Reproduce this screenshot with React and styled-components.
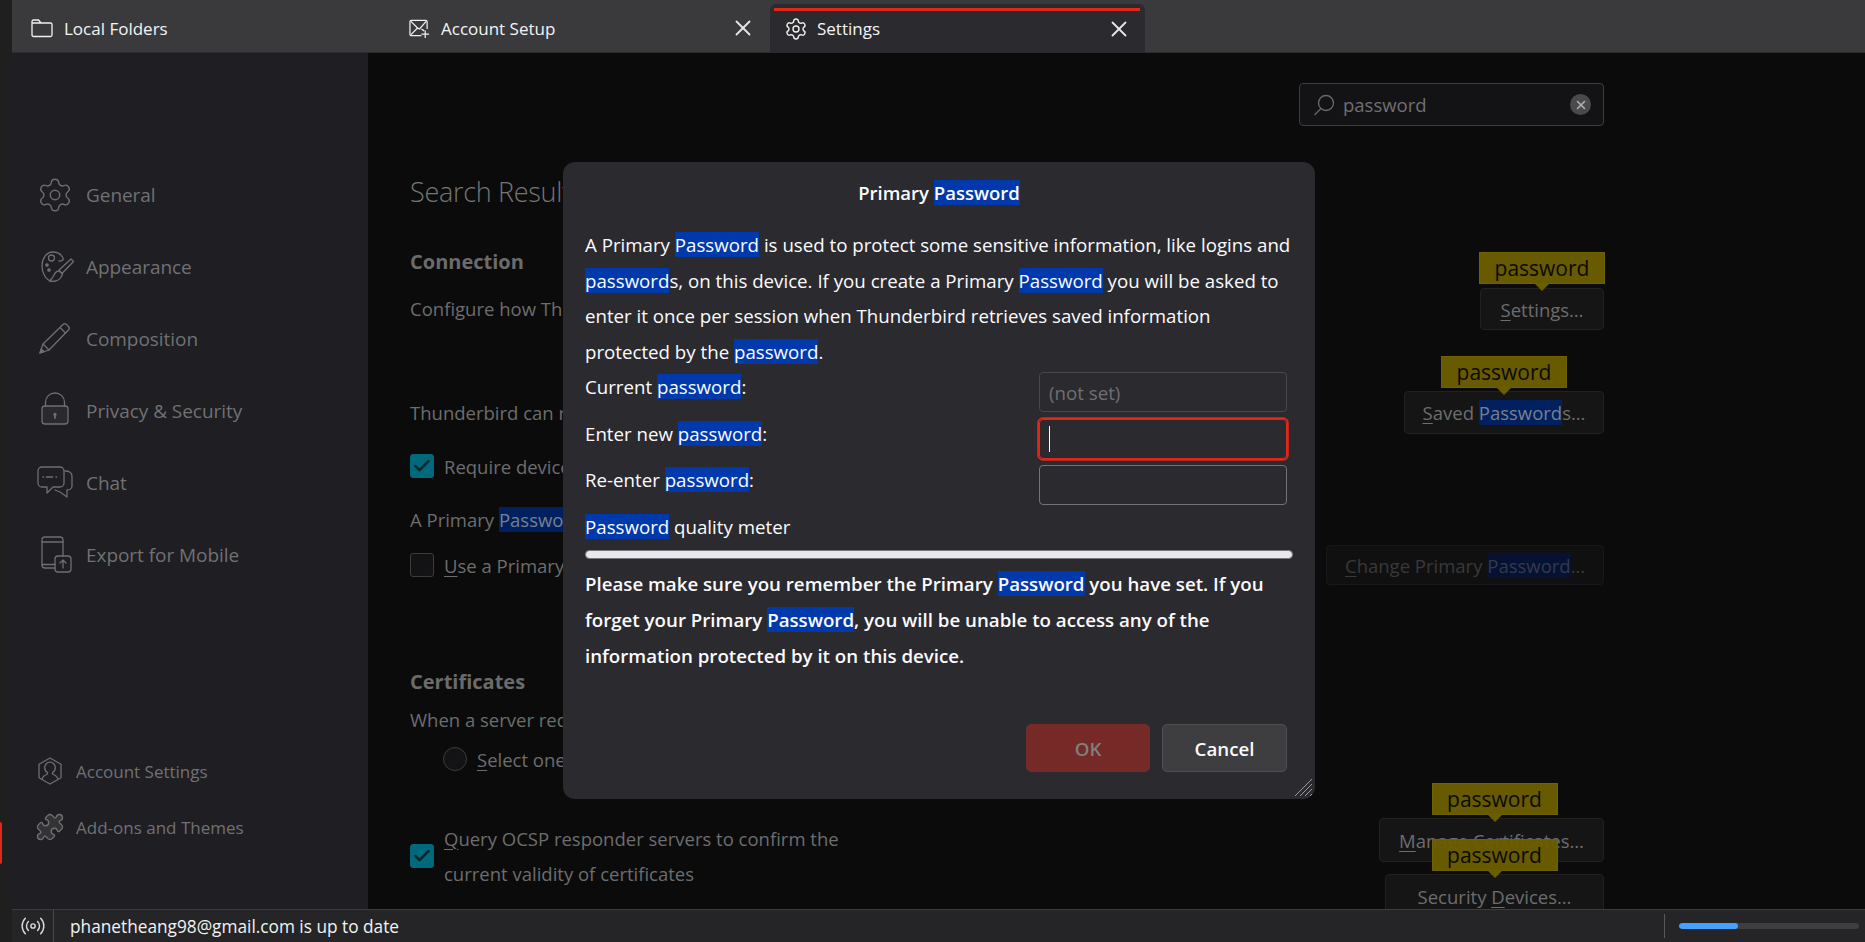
import React from 'react';
import styled, { createGlobalStyle } from 'styled-components';
import { Settings as GearIcon, X, Puzzle, Radio, Check } from 'lucide-react';

const GlobalStyle = createGlobalStyle`
	html, body {
		margin: 0;
		height: 100%;
		background: #0b0b0b;
		overflow: hidden;
	}
	* {
		box-sizing: border-box;
	}
	body {
		font-family: 'Open Sans', 'Noto Sans', sans-serif;
		font-size: 17px;
	}
`;

const Page = styled.div`
	position: relative;
	display: flex;
	width: 100vw;
	height: 100vh;
	overflow: hidden;
`;

const EdgeStrip = styled.div`
	width: 12px;
	flex: none;
	background: #1f1f1f;
	display: flex;
	flex-direction: column;
	justify-content: flex-end;
	padding-bottom: 78px;
`;

const EdgeMark = styled.div`
	width: 2px;
	height: 42px;
	background: #e22618;
	border-radius: 0 2px 2px 0;
`;

const Main = styled.div`
	flex: 1;
	min-width: 0;
	display: flex;
	flex-direction: column;
`;

const TabBar = styled.div`
	height: 53px;
	flex: none;
	display: flex;
	padding-left: 1px;
	background: #3a3a3c;
	border-bottom: 1px solid #2c2c2e;
`;

const Tab = styled.div`
	position: relative;
	width: ${(p) => p.$width}px;
	height: ${(p) => (p.$active ? '49px' : '52px')};
	margin-top: ${(p) => (p.$active ? '4px' : '0')};
	display: flex;
	align-items: center;
	gap: ${(p) => (p.$active ? '9px' : '11px')};
	padding: ${(p) => (p.$active ? '0 13px 0 14px' : '4px 14px 0 18px')};
	color: #f4f4f5;
	font-size: 17px;
	background: ${(p) => (p.$active ? '#2b2a2f' : 'transparent')};
	border-radius: ${(p) => (p.$active ? '6px 6px 0 0' : '0')};
	&::before {
		content: ${(p) => (p.$active ? "''" : 'none')};
		position: absolute;
		top: 4px;
		left: 4px;
		right: 5px;
		height: 3px;
		background: #e22618;
	}
`;

const TabLabel = styled.span`
	flex: 1;
`;

const TabClose = styled(X)`
	width: 26px;
	height: 26px;
	color: #e6e6e6;
	stroke-width: 1.7;
`;

const Body = styled.div`
	flex: 1;
	min-height: 0;
	display: flex;
`;

const Sidebar = styled.nav`
	width: 356px;
	flex: none;
	background: #1e1e23;
	display: flex;
	flex-direction: column;
	padding: 106px 0 54px;
`;

const NavItem = styled.div`
	height: 72px;
	display: flex;
	align-items: center;
	padding-left: 22px;
	gap: 10px;
	color: #717173;
	font-size: 19px;
	letter-spacing: -0.05px;
`;

const NavIcon = styled.svg`
	width: 42px;
	height: 42px;
	flex: none;
	fill: none;
	stroke: #6f6f71;
	stroke-width: 1.3;
	stroke-linecap: round;
	stroke-linejoin: round;
`;

const GeneralIcon = styled(GearIcon)`
	width: 38px;
	height: 38px;
	margin: 0 2px;
	flex: none;
	color: #6f6f71;
	stroke-width: 0.9;
`;

const NavFooter = styled.div`
	margin-top: auto;
`;

const SmallNavItem = styled.div`
	height: 56px;
	display: flex;
	align-items: center;
	padding-left: 23px;
	gap: 11px;
	color: #717173;
	font-size: 17px;
`;

const SmallIcon = styled.svg`
	width: 30px;
	height: 30px;
	flex: none;
	fill: none;
	stroke: #6f6f71;
	stroke-width: 1.3;
	stroke-linecap: round;
	stroke-linejoin: round;
`;

const PuzzleIcon = styled(Puzzle)`
	width: 30px;
	height: 30px;
	flex: none;
	color: #6f6f71;
	fill: #333336;
	stroke-width: 1.1;
`;

const Content = styled.main`
	position: relative;
	flex: 1;
	min-width: 0;
	overflow: hidden;
	background: #0b0b0b;
	padding: 30px 261px 0 42px;
	color: #6d6d6e;
	font-size: 18.5px;
`;

const SearchRow = styled.div`
	display: flex;
	justify-content: flex-end;
`;

const SearchBox = styled.div`
	width: 305px;
	height: 43px;
	display: flex;
	align-items: center;
	gap: 8px;
	padding: 0 12px 0 13px;
	background: #131316;
	border: 1px solid #3c3c3e;
	border-radius: 4px;
	color: #707072;
`;

const SearchIcon = styled.svg`
	width: 22px;
	height: 22px;
	fill: none;
	stroke: #6a6a6c;
	stroke-width: 1.3;
	flex: none;
`;

const SearchText = styled.span`
	flex: 1;
`;

const ClearButton = styled.div`
	width: 21px;
	height: 21px;
	border-radius: 50%;
	background: #4a4a4c;
	display: flex;
	align-items: center;
	justify-content: center;
	color: #b0b0b0;
`;

const PageTitle = styled.h1`
	margin: 46px 0 0;
	font-size: 27px;
	line-height: 40px;
	font-weight: 300;
	letter-spacing: -0.3px;
	color: #757576;
`;

const SectionTitle = styled.h2`
	margin: ${(p) => p.$top}px 0 0;
	font-size: 20px;
	line-height: 30px;
	font-weight: 700;
	color: #6b6b6c;
`;

const SpreadRow = styled.div`
	margin-top: ${(p) => p.$top}px;
	display: flex;
	justify-content: space-between;
	align-items: ${(p) => (p.$start ? 'flex-start' : 'center')};
`;

const RowText = styled.div`
	line-height: ${(p) => p.$line || 36}px;
	margin-top: ${(p) => p.$top || 0}px;
`;

const CheckRow = styled.div`
	display: flex;
	align-items: center;
	gap: 10px;
	margin-top: ${(p) => p.$top || 0}px;
	padding-left: ${(p) => p.$indent || 0}px;
	line-height: 35px;
`;

const CheckBox = styled.div`
	width: 24px;
	height: 24px;
	flex: none;
	display: flex;
	align-items: center;
	justify-content: center;
	border-radius: 3px;
	background: ${(p) => (p.$checked ? '#006a7c' : '#131316')};
	border: 1px solid ${(p) => (p.$checked ? '#006a7c' : '#3c3c3e')};
	color: #0b2730;
`;

const RadioDot = styled.div`
	width: 24px;
	height: 24px;
	flex: none;
	border-radius: 50%;
	background: #131316;
	border: 1px solid #3c3c3e;
`;

const ButtonColumn = styled.div`
	display: flex;
	flex-direction: column;
	align-items: flex-end;
	gap: 12px;
`;

const GhostButton = styled.div`
	position: relative;
	width: ${(p) => p.$width}px;
	height: ${(p) => p.$height || 43}px;
	display: flex;
	align-items: center;
	justify-content: center;
	background: ${(p) => (p.$faint ? '#101011' : '#151516')};
	border: 1px solid ${(p) => (p.$faint ? '#18181a' : '#212122')};
	border-radius: 4px;
	color: ${(p) => (p.$faint ? '#39393b' : '#6d6d6e')};
	white-space: nowrap;
`;

const Tooltip = styled.div`
	position: absolute;
	bottom: calc(100% + ${(p) => p.$lift || 4}px);
	left: 50%;
	transform: translateX(calc(-50% + ${(p) => p.$shift || 0}px));
	width: 126px;
	height: 32px;
	display: flex;
	align-items: center;
	justify-content: center;
	background: rgba(107, 94, 0, 0.96);
	border: 1px solid #6f6200;
	color: #0c0b00;
	font-size: 21px;
	z-index: 2;
	&::after {
		content: '';
		position: absolute;
		top: 100%;
		left: 50%;
		margin-left: -8px;
		border: 8px solid transparent;
		border-top-color: #6b5e00;
		border-bottom: 0;
	}
`;

const Hit = styled.span`
	background: ${(p) => (p.$faint ? '#061233' : '#00205f')};
	color: ${(p) => (p.$faint ? '#343a48' : '#77808f')};
`;

const Key = styled.span`
	text-decoration: underline;
	text-underline-offset: 3px;
	text-decoration-thickness: 1px;
`;

const StatusBar = styled.footer`
	height: 33px;
	flex: none;
	display: flex;
	align-items: center;
	background: #252527;
	border-top: 1px solid #3c3c3e;
	color: #f2f2f3;
	font-size: 17.25px;
	position: relative;
	z-index: 1;
`;

const StatusIcon = styled.div`
	width: 42px;
	height: 100%;
	flex: none;
	display: flex;
	align-items: center;
	justify-content: center;
	border-right: 1px solid #48484a;
	color: #dcdcdc;
`;

const StatusText = styled.span`
	flex: 1;
	padding-left: 16px;
`;

const StatusDivider = styled.div`
	width: 1px;
	height: 24px;
	background: #58585a;
`;

const Progress = styled.div`
	width: 180px;
	height: 6px;
	margin: 0 6px 0 14px;
	border-radius: 3px;
	background: #3e3e40;
	overflow: hidden;
`;

const ProgressFill = styled.div`
	height: 100%;
	width: 33%;
	border-radius: 3px;
	background: #45a1ff;
`;

const Dialog = styled.section`
	position: absolute;
	top: 162px;
	left: 563px;
	width: 752px;
	height: 637px;
	display: flex;
	flex-direction: column;
	padding: 13px 22px 27px;
	background: #2b2a2f;
	border-radius: 12px;
	color: #fbfbfe;
	font-size: 18.7px;
	z-index: 5;
`;

const DialogTitle = styled.div`
	text-align: center;
	font-weight: 600;
	font-size: 18.5px;
	line-height: 36px;
`;

const Mark = styled.span`
	background: #0039ab;
`;

const Paragraph = styled.p`
	margin: ${(p) => p.$top}px 0 0;
	line-height: 35.6px;
	white-space: nowrap;
	font-weight: ${(p) => (p.$bold ? 600 : 400)};
`;

const FormGrid = styled.div`
	margin-top: 3px;
	padding-right: 6px;
	display: grid;
	grid-template-columns: 1fr 248px;
	grid-auto-rows: 40px;
	row-gap: 6.5px;
`;

const FieldLabel = styled.label`
	line-height: 30px;
`;

const Field = styled.div`
	display: flex;
	align-items: center;
	padding: 0 9px;
	border-radius: 4px;
	color: #6f6f72;
	border: 1px solid ${(p) => (p.$focus ? '#e22618' : p.$disabled ? '#49494c' : '#737376')};
	box-shadow: ${(p) => (p.$focus ? '0 0 0 1.8px #e22618' : 'none')};
`;

const Caret = styled.div`
	width: 1px;
	height: 26px;
	background: #fbfbfe;
`;

const MeterLabel = styled.div`
	margin-top: 4px;
	line-height: 36px;
`;

const Meter = styled.div`
	margin-top: 5px;
	height: 9px;
	border-radius: 4.5px;
	background: #e8e8ee;
	border: 1px solid #78787c;
`;

const DialogActions = styled.div`
	margin-top: auto;
	padding-right: 6px;
	display: flex;
	justify-content: flex-end;
	gap: 12px;
`;

const DialogButton = styled.div`
	width: ${(p) => (p.$primary ? 124 : 125)}px;
	height: 48px;
	display: flex;
	align-items: center;
	justify-content: center;
	border-radius: 5px;
	font-weight: 600;
	background: ${(p) => (p.$primary ? '#762a28' : '#3e3e40')};
	border: 1px solid ${(p) => (p.$primary ? '#762a28' : '#505052')};
	color: ${(p) => (p.$primary ? '#7f7f7f' : '#fbfbfe')};
`;

const Grip = styled.svg`
	position: absolute;
	right: 2px;
	bottom: 2px;
	width: 22px;
	height: 22px;
	stroke: #9a9a9c;
	stroke-width: 1;
`;

const Cog = () => <GearIcon size={24} color="#f0f0f0" strokeWidth={1.4} />;

const FolderGlyph = () => (
	<svg width="22" height="22" viewBox="0 0 22 22" fill="none" stroke="#f0f0f0" strokeWidth="1.3">
		<path d="M1 6V4.500A1.500 1.500 0 0 1 2.500 3h5L10 6h9.500A1.500 1.500 0 0 1 21 7.500V18a1.500 1.500 0 0 1-1.500 1.500h-17A1.500 1.500 0 0 1 1 18V6h9" />
	</svg>
);

const MailPlusGlyph = () => (
	<svg width="21" height="24" viewBox="0 0 22 24" fill="none" stroke="#f0f0f0" strokeWidth="1.3">
		<path d="M13 20H2.500A1.500 1.500 0 0 1 1 18.500v-13A1.500 1.500 0 0 1 2.500 4h15A1.500 1.500 0 0 1 19 5.500V13" />
		<path d="M2 5l7 7 2 1 7-8M2 19l7-7M13 13l3 2" />
		<path d="M17 14.500v8M13 18.500h8" />
	</svg>
);

const PaletteGlyph = () => (
	<NavIcon viewBox="0 0 42 42">
		<path d="M25 15c3 0 5-1 4-3-2-4-6-6-10-6C12 6 8 13 8 20c0 7 4 14 9 15" />
		<circle cx="17.500" cy="12" r="3" />
		<circle cx="13" cy="19" r="1.200" fill="#6f6f71" />
		<circle cx="15" cy="24" r="1.200" fill="#6f6f71" />
		<path d="M25 24L37 13l2.500 2.500L28 27.500z" />
		<path d="M24.500 25c-3 0-4 3-5 5-1 2-3 4-4 5 4 1 9 0 11-3 1-2 2-3 2-4.500z" />
	</NavIcon>
);

const PencilGlyph = () => (
	<NavIcon viewBox="0 0 42 42">
		<path d="M29 6.500a2.500 2.500 0 0 1 3.500 0l2 2a2.500 2.500 0 0 1 0 3.500L15 32l-9 3 3-9z" />
		<path d="M26 9.500l5.500 5.500M9 26l6 6" />
		<path d="M6 35l1.200-4 2.800 2.800z" fill="#6f6f71" />
	</NavIcon>
);

const LockGlyph = () => (
	<NavIcon viewBox="0 0 42 42">
		<rect x="8" y="16" width="26" height="18" rx="3" fill="#2a2a2e" />
		<path d="M11.500 16v-4a9.500 9 0 0 1 19 0v4" />
		<path d="M21 25v3" strokeWidth="1.800" />
		<circle cx="21" cy="24.500" r="1" fill="#6f6f71" />
	</NavIcon>
);

const ChatGlyph = () => (
	<NavIcon viewBox="0 0 42 42">
		<path d="M8 5h18a4 4 0 0 1 4 4v12a4 4 0 0 1-4 4h-7l-6 6v-6H8a4 4 0 0 1-4-4V9a4 4 0 0 1 4-4z" />
		<path d="M31 9c4 0 7 2 7 5v10c0 2-2 4-5 4v7l-7-5-5-2" />
		<path d="M12.500 15h6M9 15h.5M22 15h.5" strokeWidth="1.500" />
	</NavIcon>
);

const MobileGlyph = () => (
	<NavIcon viewBox="0 0 42 42">
		<path d="M21 34H11a3 3 0 0 1-3-3V6a3 3 0 0 1 3-3h15a3 3 0 0 1 3 3v16" />
		<path d="M8 8h21M8 30.500h13" />
		<rect x="21" y="22" width="16" height="16" rx="3" />
		<path d="M29 34v-8M26 29l3-3 3 3" />
	</NavIcon>
);

const AccountGlyph = () => (
	<SmallIcon viewBox="0 0 30 30">
		<path d="M15 2l11 6.200v13.600L15 28 4 21.800V8.200z" />
		<path d="M7 23.500c.5-3.500 3-4.500 5.500-5.500v-1.500c-2-1-2.800-3-2.800-5a5.300 5.300 0 0 1 10.600 0c0 2-.8 4-2.800 5V18c2.500 1 5 2 5.500 5.500" />
	</SmallIcon>
);

const LensGlyph = () => (
	<SearchIcon viewBox="0 0 22 22">
		<circle cx="13" cy="9" r="7.500" />
		<path d="M8 14.500L1.500 21" />
	</SearchIcon>
);

const App = () => (
	<>
		<GlobalStyle />
		<Page>
			<EdgeStrip>
				<EdgeMark />
			</EdgeStrip>
			<Main>
				<TabBar>
					<Tab $width={378}>
						<FolderGlyph />
						<TabLabel>Local Folders</TabLabel>
					</Tab>
					<Tab $width={379}>
						<MailPlusGlyph />
						<TabLabel>Account Setup</TabLabel>
						<TabClose />
					</Tab>
					<Tab $width={375} $active>
						<Cog />
						<TabLabel>Settings</TabLabel>
						<TabClose />
					</Tab>
				</TabBar>
				<Body>
					<Sidebar>
						<NavItem>
							<GeneralIcon />
							General
						</NavItem>
						<NavItem>
							<PaletteGlyph />
							Appearance
						</NavItem>
						<NavItem>
							<PencilGlyph />
							Composition
						</NavItem>
						<NavItem>
							<LockGlyph />
							Privacy &amp; Security
						</NavItem>
						<NavItem>
							<ChatGlyph />
							Chat
						</NavItem>
						<NavItem>
							<MobileGlyph />
							Export for Mobile
						</NavItem>
						<NavFooter>
							<SmallNavItem>
								<AccountGlyph />
								Account Settings
							</SmallNavItem>
							<SmallNavItem>
								<PuzzleIcon />
								Add-ons and Themes
							</SmallNavItem>
						</NavFooter>
					</Sidebar>
					<Content>
						<SearchRow>
							<SearchBox>
								<LensGlyph />
								<SearchText>password</SearchText>
								<ClearButton>
									<X size={14} strokeWidth={2.6} />
								</ClearButton>
							</SearchBox>
						</SearchRow>
						<PageTitle>Search Results</PageTitle>
						<SectionTitle $top={35}>Connection</SectionTitle>
						<SpreadRow $top={11}>
							<RowText>Configure how Thunderbird connects to the internet.</RowText>
							<GhostButton $width={124} $height={42}>
								<Tooltip $lift={5}>password</Tooltip>
								<span>
									<Key>S</Key>ettings…
								</span>
							</GhostButton>
						</SpreadRow>
						<SpreadRow $top={61}>
							<RowText>Thunderbird can remember passwords for all of your accounts.</RowText>
							<GhostButton $width={200}>
								<Tooltip>password</Tooltip>
								<span>
									<Key>S</Key>aved <Hit>Password</Hit>s…
								</span>
							</GhostButton>
						</SpreadRow>
						<CheckRow $top={14.5}>
							<CheckBox $checked>
								<Check size={20} strokeWidth={3} />
							</CheckBox>
							Require device sign-in to fill and manage passwords
						</CheckRow>
						<RowText $top={18.5}>
							A Primary <Hit>Password</Hit> protects all your passwords, but you must enter it once per session.
						</RowText>
						<SpreadRow $top={7}>
							<CheckRow>
								<CheckBox />
								<span>
									<Key>U</Key>se a Primary Password
								</span>
							</CheckRow>
							<GhostButton $width={278} $height={40} $faint>
								<span>
									<Key>C</Key>hange Primary <Hit $faint>Password</Hit>…
								</span>
							</GhostButton>
						</SpreadRow>
						<SectionTitle $top={81.5}>Certificates</SectionTitle>
						<RowText $top={8} $line={30}>
							When a server requests your personal certificate
						</RowText>
						<CheckRow $top={7} $indent={33}>
							<RadioDot />
							<span>
								<Key>S</Key>elect one automatically
							</span>
						</CheckRow>
						<SpreadRow $top={41.5} $start>
							<CheckRow $top={2.5}>
								<CheckBox $checked>
									<Check size={20} strokeWidth={3} />
								</CheckBox>
								<span>
									<Key>Q</Key>uery OCSP responder servers to confirm the
									<br />
									current validity of certificates
								</span>
							</CheckRow>
							<ButtonColumn>
								<GhostButton $width={225} $height={44}>
									<span>
										<Key>M</Key>anage Certificates…
									</span>
									<Tooltip $shift={3}>password</Tooltip>
								</GhostButton>
								<GhostButton $width={219} $height={44}>
									<span>
										Security <Key>D</Key>evices…
									</span>
									<Tooltip>password</Tooltip>
								</GhostButton>
							</ButtonColumn>
						</SpreadRow>
					</Content>
				</Body>
				<StatusBar>
					<StatusIcon>
						<Radio size={26} strokeWidth={1.3} />
					</StatusIcon>
					<StatusText>phanetheang98@gmail.com is up to date</StatusText>
					<StatusDivider />
					<Progress>
						<ProgressFill />
					</Progress>
				</StatusBar>
			</Main>
			<Dialog>
				<DialogTitle>
					Primary <Mark>Password</Mark>
				</DialogTitle>
				<Paragraph $top={16}>
					A Primary <Mark>Password</Mark> is used to protect some sensitive information, like logins and
					<br />
					<Mark>password</Mark>s, on this device. If you create a Primary <Mark>Password</Mark> you will be asked to
					<br />
					enter it once per session when Thunderbird retrieves saved information
					<br />
					protected by the <Mark>password</Mark>.
				</Paragraph>
				<FormGrid>
					<FieldLabel>
						Current <Mark>password</Mark>:
					</FieldLabel>
					<Field $disabled>(not set)</Field>
					<FieldLabel>
						Enter new <Mark>password</Mark>:
					</FieldLabel>
					<Field $focus>
						<Caret />
					</Field>
					<FieldLabel>
						Re-enter <Mark>password</Mark>:
					</FieldLabel>
					<Field />
				</FormGrid>
				<MeterLabel>
					<Mark>Password</Mark> quality meter
				</MeterLabel>
				<Meter />
				<Paragraph $top={7} $bold>
					Please make sure you remember the Primary <Mark>Password</Mark> you have set. If you
					<br />
					forget your Primary <Mark>Password</Mark>, you will be unable to access any of the
					<br />
					information protected by it on this device.
				</Paragraph>
				<DialogActions>
					<DialogButton $primary>OK</DialogButton>
					<DialogButton>Cancel</DialogButton>
				</DialogActions>
				<Grip viewBox="0 0 22 22">
					<path d="M21 4L4 21M21 9L9 21M21 14L14 21M21 19L19 21" />
				</Grip>
			</Dialog>
		</Page>
	</>
);

export default App;
